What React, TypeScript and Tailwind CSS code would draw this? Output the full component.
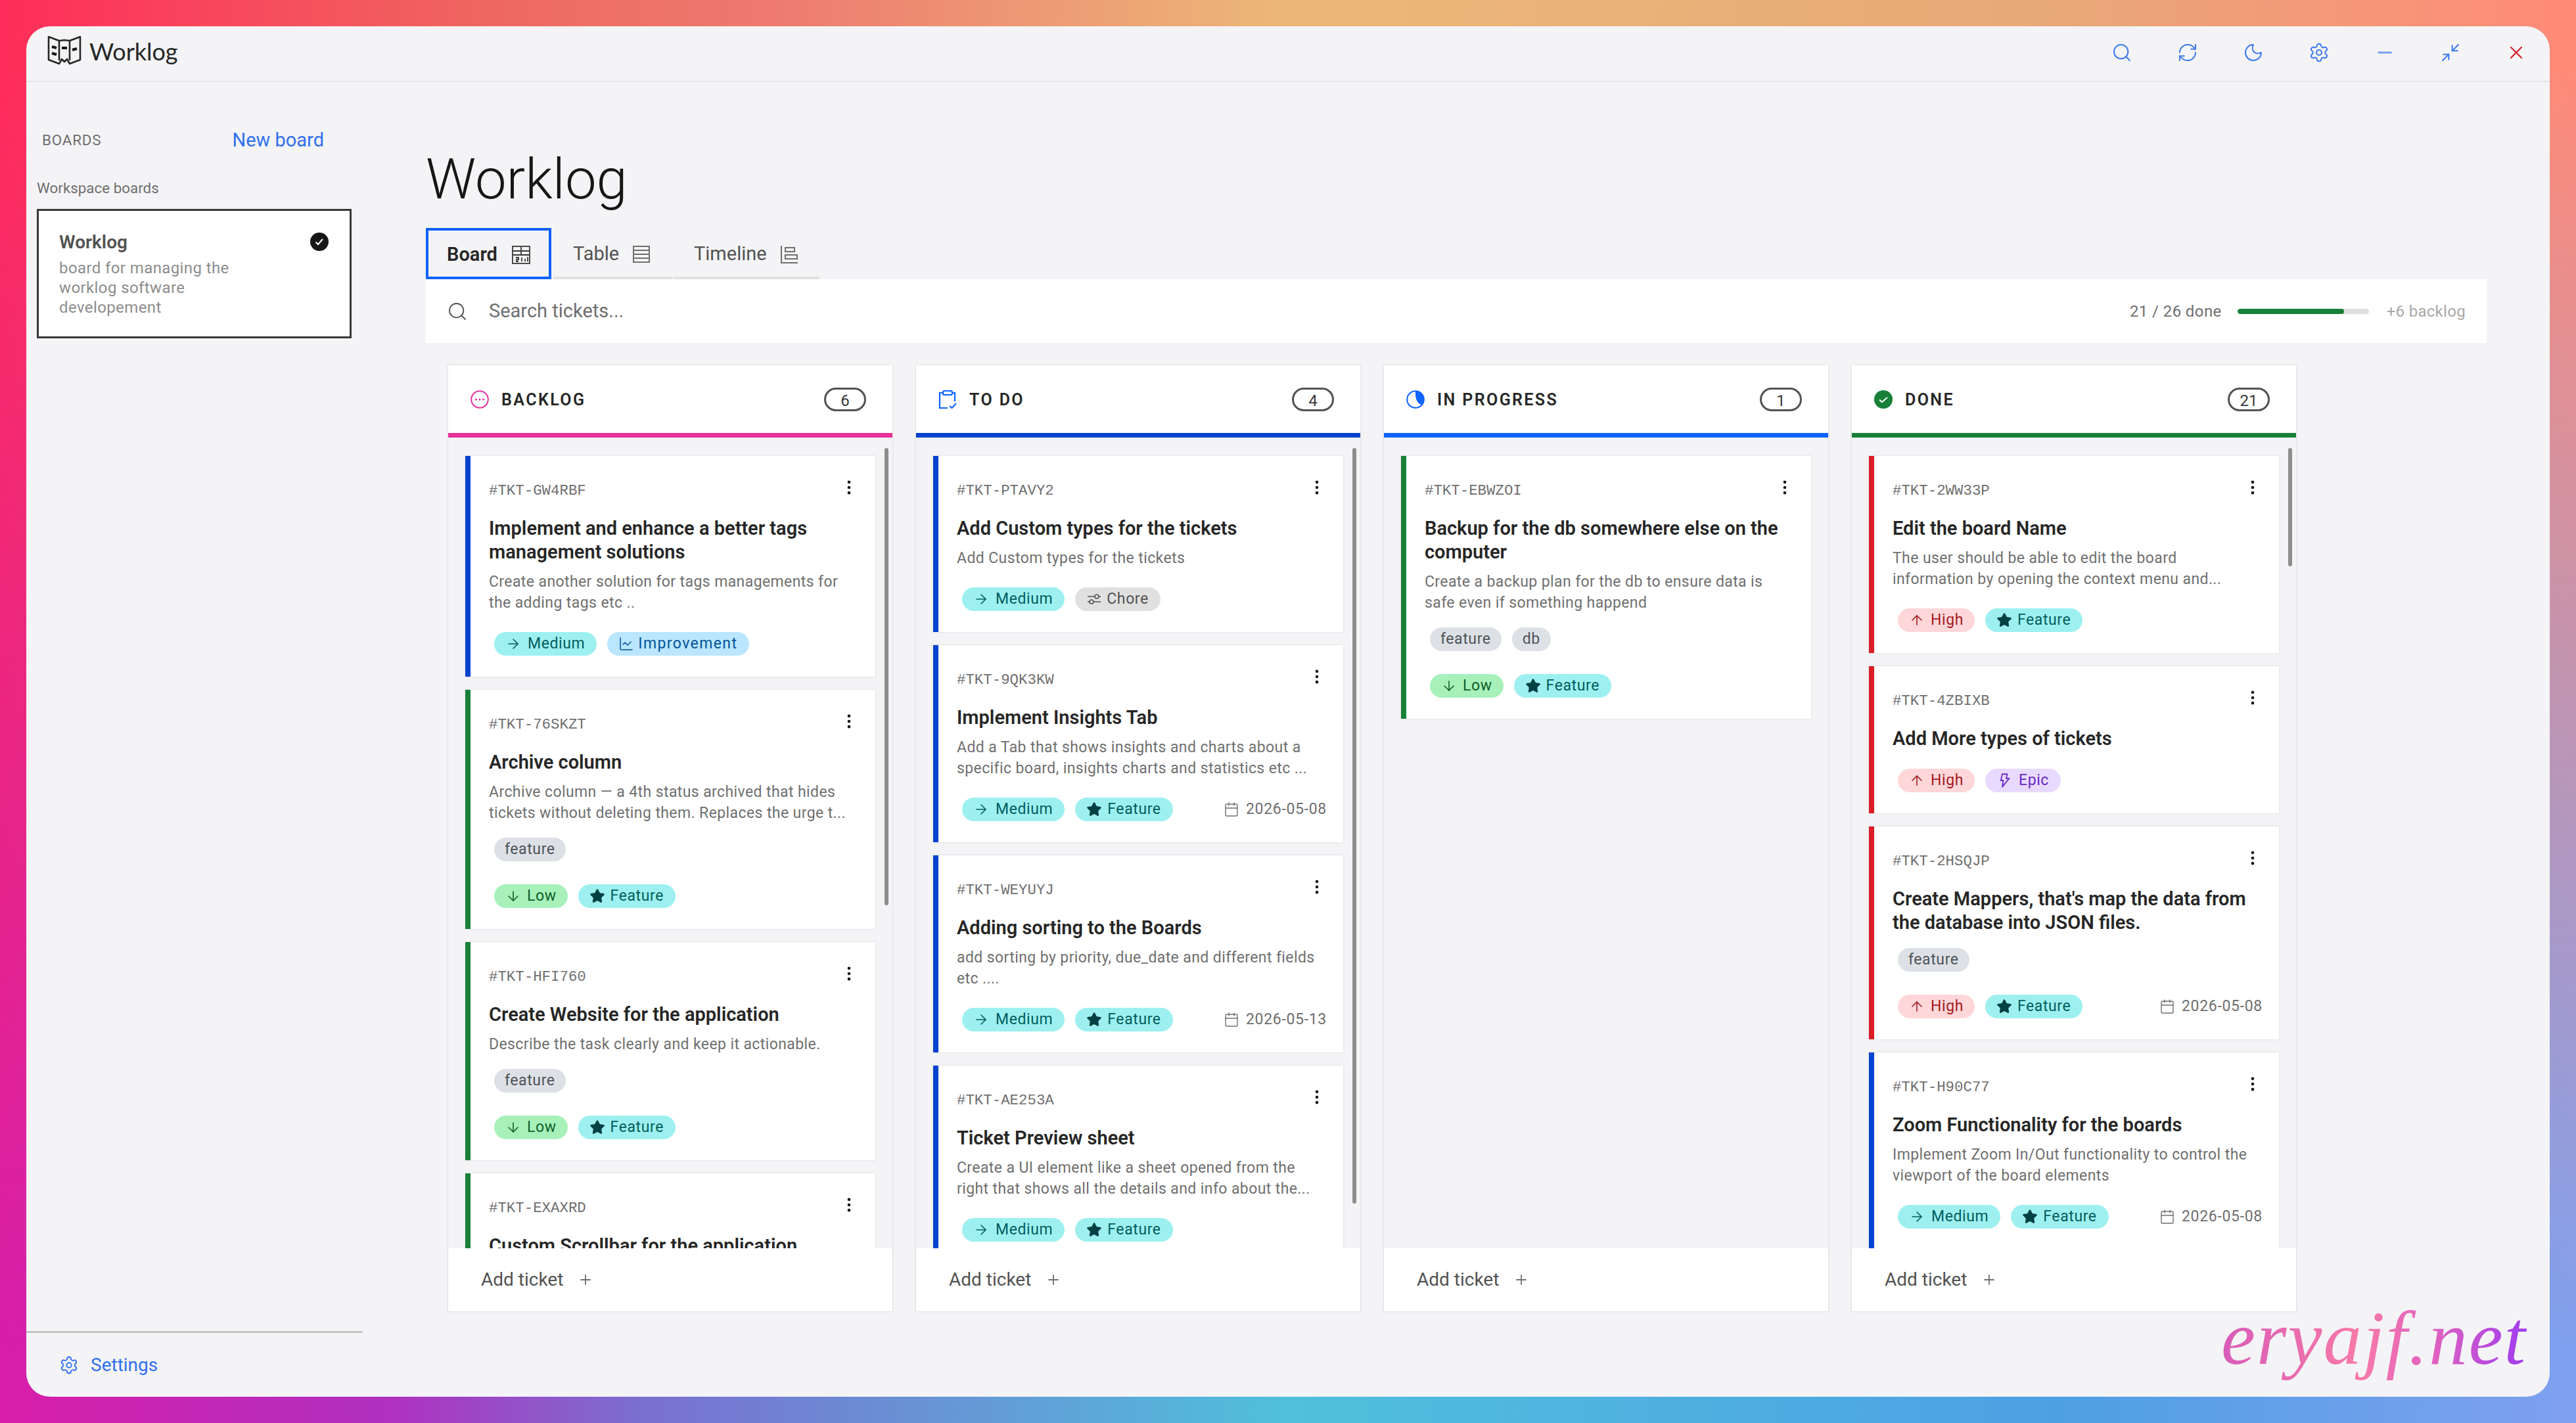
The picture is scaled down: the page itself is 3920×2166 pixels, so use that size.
import React from "react";
import {
  Search, RefreshCw, Moon, Settings, Minus, Minimize2, X, ArrowRight, ArrowDown, ArrowUp, Star,
  ChartLine, Calendar, EllipsisVertical, Plus,
} from "lucide-react";

type Kind = "Medium" | "Low" | "High" | "Feature" | "Improvement" | "Chore" | "Epic";
type Ticket = { id: string; title: string[]; desc?: string[]; bar: string; labels?: string[]; chips: Kind[]; date?: string };

const BLUE = "bg-[#0043ce]";
const GREEN = "bg-[#198038]";
const RED = "bg-[#da1e28]";

const chipStyle: Record<Kind, string> = {
  Medium: "bg-[#9ef0f0] text-[#005d5d] gap-[10px] pr-[18px]",
  Low: "bg-[#a7f0ba] text-[#0e6027] gap-[9px] pr-[17px]",
  High: "bg-[#ffd7d9] text-[#a2191f] gap-[9px] pr-[17px]",
  Feature: "bg-[#9ef0f0] text-[#005d5d] gap-[8px] pr-[18px]",
  Improvement: "bg-[#bae6ff] text-[#00539a] gap-[6px] pr-[18px] tracking-[1.4px]",
  Chore: "bg-[#e0e0e0] text-[#525252] gap-[7px] pr-[18px]",
  Epic: "bg-[#e8daff] text-[#6929c4] gap-[10px] pr-[18px]",
};

function ChipIcon({ kind }: { kind: Kind }) {
  const cls = "w-[24px] h-[24px] shrink-0";
  if (kind === "Medium") return <ArrowRight className={cls} strokeWidth={1.6} />;
  if (kind === "Low") return <ArrowDown className={cls} strokeWidth={1.6} />;
  if (kind === "High") return <ArrowUp className={cls} strokeWidth={1.6} />;
  if (kind === "Feature") return <Star className={`${cls} text-[#004144]`} fill="currentColor" strokeWidth={1.6} />;
  if (kind === "Improvement") return <ChartLine className={cls} strokeWidth={1.5} />;
  if (kind === "Chore")
    return (
      <svg viewBox="0 0 24 24" className={cls} fill="none" stroke="currentColor" strokeWidth="1.6">
        <path d="M2 8h11M19 8h3M2 16h3M11 16h11" />
        <circle cx="16" cy="8" r="3" />
        <circle cx="8" cy="16" r="3" />
      </svg>
    );
  return (
    <svg viewBox="0 0 32 32" className={cls} fill="none" stroke="currentColor" strokeWidth="2.4" strokeLinejoin="round">
      <path d="M12 29l2-13H9l3-13h10l-2 9h6z" />
    </svg>
  );
}

function Chip({ kind }: { kind: Kind }) {
  return (
    <span className={`inline-flex items-center h-[36px] pl-[17px] rounded-full text-[23px] tracking-[0.6px] ${chipStyle[kind]}`}>
      <ChipIcon kind={kind} />
      {kind}
    </span>
  );
}

function Label({ text }: { text: string }) {
  return <span className="inline-flex items-center h-[36px] px-[16px] rounded-full bg-[#dde1e6] text-[#4d5358] text-[23px] tracking-[0.6px]">{text}</span>;
}

function Card({ t }: { t: Ticket }) {
  return (
    <div className="relative shrink-0 bg-white pl-[36px] pt-[39px] pb-[32px] shadow-[0_0_3px_rgba(0,0,0,0.12)]">
      <div className={`absolute left-0 top-0 bottom-0 w-[8px] ${t.bar}`} />
      <EllipsisVertical className="absolute right-[26px] top-[34px] w-[28px] h-[28px] text-[#161616]" strokeWidth={2} />
      <div className="font-['Liberation_Mono',monospace] text-[22.4px] leading-[28px] text-[#6f6f6f]">{t.id}</div>
      <div className="mt-[25px] text-[29px] leading-[36px] font-semibold text-[#262626]">
        {t.title.map((l) => <div key={l} className="whitespace-nowrap">{l}</div>)}
      </div>
      {t.desc && (
        <div className="mt-[12px] text-[23px] leading-[32px] tracking-[0.4px] text-[#6f6f6f]">
          {t.desc.map((l) => <div key={l} className="whitespace-nowrap">{l}</div>)}
        </div>
      )}
      {t.labels && (
        <div className="mt-[21px] pl-[8px] flex gap-[16px]">
          {t.labels.map((l) => <Label key={l} text={l} />)}
        </div>
      )}
      <div className={`${t.labels ? "mt-[35px]" : "mt-[28px]"} pl-[8px] pr-[25px] flex items-center gap-[16px]`}>
        {t.chips.map((c) => <Chip key={c} kind={c} />)}
        {t.date && (
          <span className="ml-auto flex items-center gap-[10px] text-[23px] tracking-[0.7px] text-[#6f6f6f]">
            <Calendar className="w-[24px] h-[24px]" strokeWidth={1.4} />
            {t.date}
          </span>
        )}
      </div>
    </div>
  );
}

function BacklogIcon() {
  return (
    <svg viewBox="0 0 28 28" className="w-[28px] h-[28px]">
      <circle cx="14" cy="14" r="12.8" fill="none" stroke="#e6319b" strokeWidth="2" />
      <circle cx="8.5" cy="14" r="1.5" fill="#e6319b" />
      <circle cx="14" cy="14" r="1.5" fill="#e6319b" />
      <circle cx="19.5" cy="14" r="1.5" fill="#e6319b" />
    </svg>
  );
}

function TodoIcon() {
  return (
    <svg viewBox="0 0 28 30" className="w-[28px] h-[30px]" fill="none" stroke="#0f62fe" strokeWidth="2.2">
      <path d="M7 5H2v23h12M21 5h4v13" />
      <rect x="7" y="2" width="14" height="6" rx="2" />
      <path d="M17 25l3.5 3 6.5-7" />
    </svg>
  );
}

function HalfCircle() {
  return (
    <svg viewBox="0 0 28 28" className="w-[28px] h-[28px]">
      <circle cx="14" cy="14" r="12.8" fill="none" stroke="#0f62fe" strokeWidth="2" />
      <path d="M14 1.5 A12.5 12.5 0 0 1 23 22.5 C19 20 13 17 14 1.5 Z" fill="#0f62fe" />
    </svg>
  );
}

function DoneIcon() {
  return (
    <svg viewBox="0 0 28 28" className="w-[28px] h-[28px]">
      <circle cx="14" cy="14" r="14" fill="#198038" />
      <path d="M8 14.5l4 3.5 8-7" fill="none" stroke="#fff" strokeWidth="2" />
    </svg>
  );
}

function Column({ name, count, border, icon, tickets, thumb }: { name: string; count: number; border: string; icon: React.ReactNode; tickets: Ticket[]; thumb?: string }) {
  return (
    <div className="w-[676px] h-full flex flex-col shadow-[0_0_3px_rgba(0,0,0,0.14)]">
      <div className={`h-[110px] shrink-0 bg-white border-b-[7px] ${border} flex items-center pl-[34px] pr-[40px]`}>
        <span className="w-[28px] h-[30px] shrink-0 flex items-center justify-center">{icon}</span>
        <span className="ml-[19px] pt-[3px] text-[25px] font-semibold tracking-[2.4px] text-[#262626]">{name}</span>
        <span className="ml-auto w-[64px] h-[36px] rounded-full border-[3px] border-[#525252] flex items-center justify-center pt-[4px] text-[24px] text-[#393939]">{count}</span>
      </div>
      <div className="relative flex-1 min-h-0 overflow-hidden pt-[28px] pl-[26px] pr-[26px] flex flex-col gap-[20px] bg-[#f4f4f6]">
        {tickets.map((t) => <Card key={t.id} t={t} />)}
        {thumb && <div className={`absolute top-[16px] right-[6px] w-[6px] rounded-full bg-[#8d8d8d] ${thumb}`} />}
      </div>
      <div className="h-[96px] shrink-0 bg-white shadow-[0_-1px_2px_rgba(0,0,0,0.08)] flex items-center pl-[50px] text-[28px] text-[#525252] gap-[22px]">
        Add ticket
        <Plus className="w-[24px] h-[24px] text-[#6f6f6f]" strokeWidth={1.8} />
      </div>
    </div>
  );
}

function Logo() {
  return (
    <svg viewBox="0 0 52 48" className="w-[52px] h-[48px]" fill="none" stroke="#262626" strokeWidth="2.6" strokeLinejoin="round">
      <path d="M2 2l16 6 8-1 8 1 16-6v35l-16 6-4-7-4 4-4-4-4 7-16-6z" />
      <path d="M18 8v30M34 8v30" />
      <g stroke="#161616" strokeWidth="4.2">
        <path d="M7 17l7 2M7 27l7 2M22 19h8M38 22l7-2" />
      </g>
    </svg>
  );
}

function BoardIcon() {
  return (
    <svg viewBox="0 0 28 28" className="w-[28px] h-[28px]" fill="none" stroke="#393939" strokeWidth="1.8">
      <rect x="1" y="1" width="26" height="26" />
      <path d="M1 8h26M1 14h26M14 1v13" />
      <path d="M6 18h4v3H7v3h3M15 18v6M20 20v4M24 17v7" />
    </svg>
  );
}

function TableIcon() {
  return (
    <svg viewBox="0 0 28 28" className="w-[28px] h-[28px]" fill="none" stroke="#6f6f6f" strokeWidth="2">
      <rect x="2" y="2" width="24" height="24" />
      <path d="M2 8h24M2 14h24M2 20h24" />
    </svg>
  );
}

function TimelineIcon() {
  return (
    <svg viewBox="0 0 28 28" className="w-[28px] h-[28px]" fill="none" stroke="#6f6f6f" strokeWidth="2">
      <path d="M2 1v26h25" />
      <rect x="8" y="4" width="14" height="6" />
      <rect x="8" y="15" width="18" height="6" />
    </svg>
  );
}

const backlog: Ticket[] = [
  { id: "#TKT-GW4RBF", title: ["Implement and enhance a better tags", "management solutions"], desc: ["Create another solution for tags managements for", "the adding tags etc .."], bar: BLUE, chips: ["Medium", "Improvement"] },
  { id: "#TKT-76SKZT", title: ["Archive column"], desc: ["Archive column — a 4th status archived that hides", "tickets without deleting them. Replaces the urge t..."], bar: GREEN, labels: ["feature"], chips: ["Low", "Feature"] },
  { id: "#TKT-HFI760", title: ["Create Website for the application"], desc: ["Describe the task clearly and keep it actionable."], bar: GREEN, labels: ["feature"], chips: ["Low", "Feature"] },
  { id: "#TKT-EXAXRD", title: ["Custom Scrollbar for the application"], bar: GREEN, chips: ["Low", "Feature"] },
];
const todo: Ticket[] = [
  { id: "#TKT-PTAVY2", title: ["Add Custom types for the tickets"], desc: ["Add Custom types for the tickets"], bar: BLUE, chips: ["Medium", "Chore"] },
  { id: "#TKT-9QK3KW", title: ["Implement Insights Tab"], desc: ["Add a Tab that shows insights and charts about a", "specific board, insights charts and statistics etc ..."], bar: BLUE, chips: ["Medium", "Feature"], date: "2026-05-08" },
  { id: "#TKT-WEYUYJ", title: ["Adding sorting to the Boards"], desc: ["add sorting by priority, due_date and different fields", "etc ...."], bar: BLUE, chips: ["Medium", "Feature"], date: "2026-05-13" },
  { id: "#TKT-AE253A", title: ["Ticket Preview sheet"], desc: ["Create a UI element like a sheet opened from the", "right that shows all the details and info about the..."], bar: BLUE, chips: ["Medium", "Feature"] },
];
const progress: Ticket[] = [
  { id: "#TKT-EBWZOI", title: ["Backup for the db somewhere else on the", "computer"], desc: ["Create a backup plan for the db to ensure data is", "safe even if something happend"], bar: GREEN, labels: ["feature", "db"], chips: ["Low", "Feature"] },
];
const done: Ticket[] = [
  { id: "#TKT-2WW33P", title: ["Edit the board Name"], desc: ["The user should be able to edit the board", "information by opening the context menu and..."], bar: RED, chips: ["High", "Feature"] },
  { id: "#TKT-4ZBIXB", title: ["Add More types of tickets"], bar: RED, chips: ["High", "Epic"] },
  { id: "#TKT-2HSQJP", title: ["Create Mappers, that's map the data from", "the database into JSON files."], bar: RED, labels: ["feature"], chips: ["High", "Feature"], date: "2026-05-08" },
  { id: "#TKT-H90C77", title: ["Zoom Functionality for the boards"], desc: ["Implement Zoom In/Out functionality to control the", "viewport of the board elements"], bar: BLUE, chips: ["Medium", "Feature"], date: "2026-05-08" },
];

export default function App() {
  const topIcon = "w-[32px] h-[32px] text-[#3b78f0]";
  return (
    <div className="relative w-[3920px] h-[2166px] p-[40px] overflow-hidden font-['Roboto',sans-serif] bg-[linear-gradient(to_right,#d81eaa_0%,#b030c0_15%,#7a70d0_25%,#50c0dc_50%,#4ea0e4_80%,#80a0f0_100%)]">
      <div className="absolute inset-0 bg-[linear-gradient(to_right,#ff2d5a_0%,#ee6a60_20%,#ee7a70_30%,#ecb878_50%,#e8a878_80%,#ff8a78_100%)] [mask-image:linear-gradient(to_bottom,black_5%,transparent_95%)]" />
      <div className="relative h-full rounded-[36px] overflow-hidden bg-[#f4f4f6] flex flex-col">
        {/* title bar */}
        <header className="h-[85px] shrink-0 border-b-[2px] border-[#e6e6e8] flex items-center pl-[32px] pr-[35px]">
          <div className="-mt-[7px] flex items-center">
            <Logo />
            <span className="ml-[12px] text-[36px] font-['Lato',sans-serif] text-[#262626]">Worklog</span>
          </div>
          <div className="-mt-[3px] ml-auto flex items-center gap-[68px]">
            <Search className={topIcon} strokeWidth={1.5} />
            <RefreshCw className={topIcon} strokeWidth={1.5} />
            <Moon className={topIcon} strokeWidth={1.5} />
            <Settings className={topIcon} strokeWidth={1.5} />
            <Minus className="w-[32px] h-[32px] text-[#78a0f8]" strokeWidth={2.2} />
            <Minimize2 className={topIcon} strokeWidth={1.5} />
            <X className="w-[32px] h-[32px] text-[#da1e28]" strokeWidth={1.6} />
          </div>
        </header>

        <div className="flex-1 min-h-0 flex">
          {/* sidebar */}
          <aside className="w-[512px] shrink-0 flex flex-col">
            <div className="pt-[69px] pl-[24px] pr-[59px] flex items-center justify-between h-[109px]">
              <span className="text-[22.4px] tracking-[0.8px] text-[#6f6f6f]">BOARDS</span>
              <span className="text-[29px] text-[#2f6fed]">New board</span>
            </div>
            <div className="mt-[37px] pl-[16px] text-[22.4px] leading-[30px] text-[#6f6f6f]">Workspace boards</div>
            <div className="mt-[17px] ml-[16px] w-[479px] h-[197px] bg-white border-[3px] border-[#393939] pl-[31px] pr-[32px] pt-[30px] relative">
              <svg viewBox="0 0 28 28" className="absolute right-[32px] top-[33px] w-[28px] h-[28px]">
                <circle cx="14" cy="14" r="14" fill="#161616" />
                <path d="M8.5 14.5l3.5 3.5 7-8" fill="none" stroke="#fff" strokeWidth="2" />
              </svg>
              <div className="text-[28px] leading-[36px] font-semibold text-[#525252]">Worklog</div>
              <div className="mt-[6px] text-[24px] leading-[30px] tracking-[0.4px] text-[#8d8d8d]">
                <div>board for managing the</div>
                <div>worklog software</div>
                <div>developement</div>
              </div>
            </div>
            <div className="mt-auto h-[100px] border-t-[3px] border-[#c6c6c6] flex items-center pl-[50px] gap-[18px] text-[28px] text-[#2f6fed]">
              <Settings className="w-[30px] h-[30px]" strokeWidth={1.5} />
              Settings
            </div>
          </aside>

          {/* main */}
          <main className="flex-1 min-w-0 pl-[96px] pr-[96px] pt-[103px] flex flex-col">
            <h1 className="h-[90px] text-[85px] leading-[90px] font-light text-[#161616]">Worklog</h1>
            <div className="mt-[29px] h-[78px] flex">
              <div className="w-[191px] border-[4px] border-[#0f62fe] flex items-center pl-[28px] pt-[4px] gap-[22px] text-[29px] font-semibold text-[#262626]">
                Board <BoardIcon />
              </div>
              <div className="ml-[3px] w-[182px] border-b-[4px] border-[#e0e0e0] flex items-center pl-[30px] pt-[6px] gap-[20px] text-[29px] text-[#525252]">
                Table <TableIcon />
              </div>
              <div className="ml-[2px] w-[221px] border-b-[4px] border-[#e0e0e0] flex items-center pl-[30px] pt-[6px] gap-[20px] text-[29px] text-[#525252]">
                Timeline <TimelineIcon />
              </div>
            </div>
            <div className="h-[97px] shrink-0 bg-white flex items-center pl-[32px] pr-[32px]">
              <Search className="w-[32px] h-[32px] text-[#525252]" strokeWidth={1.4} />
              <span className="ml-[32px] text-[29px] text-[#6f6f6f]">Search tickets...</span>
              <span className="ml-auto text-[24px] tracking-[0.4px] text-[#6f6f6f]">21 / 26 done</span>
              <div className="ml-[24px] w-[200px] h-[8px] rounded-full bg-[#e0e0e0] overflow-hidden">
                <div className="w-[162px] h-full rounded-full bg-[#198038]" />
              </div>
              <span className="ml-[27px] text-[24px] tracking-[0.3px] text-[#a8a8a8]">+6 backlog</span>
            </div>
            <div className="mt-[34px] pl-[34px] h-[1440px] flex gap-[36px]">
              <Column name="BACKLOG" count={6} border="border-[#e6319b]" icon={<BacklogIcon />} tickets={backlog} thumb="h-[696px]" />
              <Column name="TO DO" count={4} border="border-[#0043ce]" icon={<TodoIcon />} tickets={todo} thumb="h-[1150px]" />
              <Column name="IN PROGRESS" count={1} border="border-[#0f62fe]" icon={<HalfCircle />} tickets={progress} />
              <Column name="DONE" count={21} border="border-[#198038]" icon={<DoneIcon />} tickets={done} thumb="h-[180px]" />
            </div>
          </main>
        </div>
      </div>
      <div className="absolute left-[3380px] top-[1972px] font-['Liberation_Serif',serif] italic text-[117px] leading-[130px] tracking-[2px] text-transparent bg-clip-text bg-[linear-gradient(to_right,#d85cb8,#f87aa8_45%,#e060c0_70%,#a03cf0)]">
        eryajf.net
      </div>
    </div>
  );
}
